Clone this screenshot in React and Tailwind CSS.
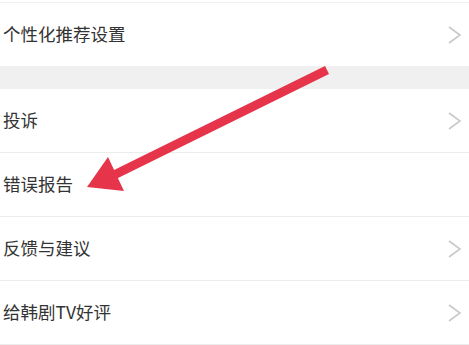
import React from 'react';

const Chevron = () => (
  <svg width="14" height="18" viewBox="0 0 14 18" className="shrink-0">
    <polyline points="1,1 12,9 1,17" fill="none" stroke="#c9c9c9" strokeWidth="1.6" />
  </svg>
);

const Row = ({ label, arrow = true, border = true }) => (
  <div
    className={`flex items-center justify-between h-[64px] pl-[3px] pr-[7px] bg-white ${
      border ? 'border-b border-[#ececec]' : ''
    }`}
  >
    <span className="text-[17.5px] text-[#333]">{label}</span>
    {arrow && <Chevron />}
  </div>
);

const App = () => {
  return (
    <div
      className="relative w-[469px] h-[345px] overflow-hidden bg-white pt-[2px]"
      style={{ fontFamily: '"Noto Sans CJK SC", "Noto Sans", sans-serif' }}
    >
      <div className="border-t border-[#f0f0f0]">
        <div className="flex items-center justify-between h-[63px] pl-[3px] pr-[7px]">
          <span className="text-[17.5px] text-[#333]">个性化推荐设置</span>
          <Chevron />
        </div>
      </div>
      <div className="h-[23px] bg-[#f0f0f0]" />
      <Row label="投诉" />
      <Row label="错误报告" arrow={false} />
      <Row label="反馈与建议" />
      <Row label="给韩剧TV好评" />

      {/* red annotation arrow */}
      <svg className="absolute inset-0 pointer-events-none" width="469" height="345" viewBox="0 0 469 345">
        <line x1="112" y1="176" x2="327" y2="70" stroke="#e6354b" strokeWidth="9" />
        <polygon points="87,187 108,157 124,191" fill="#e6354b" />
      </svg>
    </div>
  );
};

export default App;
